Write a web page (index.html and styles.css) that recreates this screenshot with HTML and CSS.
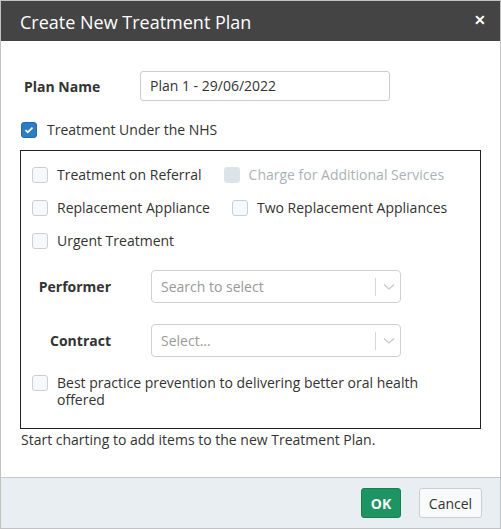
FILE: index.html
```html
<!DOCTYPE html>
<html>
  <head>
    <title>Create New Treatment Plan</title>
    <link rel="stylesheet" href="styles.css">
  </head>
  <body>
    <div class="dialog">
      <div class="dialog-header">
        <h1>Create New Treatment Plan</h1>
        <span class="close">&#x2715;</span>
      </div>
      <div class="dialog-body">
        <div class="plan-row">
          <label class="plan-label">Plan Name</label>
          <div class="text-input">Plan 1 - 29/06/2022</div>
        </div>
        <label class="check nhs">
          <span class="box checked">
            <svg viewBox="0 0 16 16" width="16" height="16"><path d="M4 8.2l2.6 2.5L12 5.4" fill="none" stroke="#fff" stroke-width="2"/></svg>
          </span>
          Treatment Under the NHS
        </label>
        <div class="nhs-panel">
          <div class="check-grid">
            <label class="check"><span class="box"></span>Treatment on Referral</label>
            <label class="check disabled"><span class="box"></span>Charge for Additional Services</label>
            <label class="check"><span class="box"></span>Replacement Appliance</label>
            <label class="check"><span class="box"></span>Two Replacement Appliances</label>
            <label class="check"><span class="box"></span>Urgent Treatment</label>
          </div>
          <div class="field-row">
            <label class="field-label">Performer</label>
            <div class="select">
              <span class="placeholder">Search to select</span>
              <span class="sep"></span>
              <svg class="chevron" viewBox="0 0 12 8" width="12" height="8"><path d="M1 1.5l5 4.5 5-4.5" fill="none" stroke="#c8c8c8" stroke-width="1.3"/></svg>
            </div>
          </div>
          <div class="field-row">
            <label class="field-label">Contract</label>
            <div class="select">
              <span class="placeholder">Select...</span>
              <span class="sep"></span>
              <svg class="chevron" viewBox="0 0 12 8" width="12" height="8"><path d="M1 1.5l5 4.5 5-4.5" fill="none" stroke="#c8c8c8" stroke-width="1.3"/></svg>
            </div>
          </div>
          <label class="check wide"><span class="box"></span>Best practice prevention to delivering better oral health offered</label>
        </div>
        <p class="hint">Start charting to add items to the new Treatment Plan.</p>
      </div>
      <div class="dialog-footer">
        <button class="btn ok">OK</button>
        <button class="btn cancel">Cancel</button>
      </div>
    </div>
  </body>
</html>
```

FILE: styles.css
```css
body {
  margin: 0;
  font-family: "Open Sans", sans-serif;
  color: #333;
  background: #fff;
}

.dialog {
  width: 501px;
  height: 529px;
  box-sizing: border-box;
  border: 1px solid #c2c2c2;
  display: flex;
  flex-direction: column;
}

.dialog-header {
  height: 40px;
  background-color: #444;
  display: flex;
  align-items: center;
  justify-content: space-between;
  padding: 0 14px 0 19px;
}

.dialog-header h1 {
  margin: 0;
  color: #fff;
  font-size: 18px;
  font-weight: normal;
  margin-top: 2px;
}

.close {
  color: #fff;
  font-size: 14px;
  font-weight: bold;
  margin-top: -4px;
}

.dialog-body {
  flex: 1;
  padding: 30px 19px 0;
}

.plan-row {
  display: flex;
  align-items: center;
}

.plan-label {
  width: 116px;
  padding-left: 4px;
  font-size: 14px;
  font-weight: bold;
}

.text-input {
  width: 230px;
  height: 28px;
  border: 1px solid #ccc;
  border-radius: 3px;
  padding: 0 9px;
  line-height: 28px;
  font-size: 14px;
}

.check {
  display: flex;
  align-items: flex-start;
  font-size: 14px;
  line-height: 17px;
}

.box {
  flex: none;
  width: 14px;
  height: 14px;
  border: 1px solid #c9ced3;
  border-radius: 3px;
  background: #f7f8f9;
  margin: 1px 9px 0 0;
  display: flex;
  align-items: center;
  justify-content: center;
}

.box.checked {
  background: #2f7cc0;
  border-color: #1f6aaa;
}

.nhs {
  margin-top: 20px;
  margin-left: 1px;
}

.nhs .box {
  margin-right: 10px;
}

.disabled {
  color: #aab2b8;
}

.disabled .box {
  background: #dde4e8;
  border-color: #dde4e8;
}

.nhs-panel {
  margin-top: 12px;
  height: 279px;
  box-sizing: border-box;
  border: 1px solid #222;
  padding: 15px 11px 0;
}

.check-grid {
  display: flex;
  flex-wrap: wrap;
  column-gap: 22px;
  row-gap: 16px;
}

.field-row {
  display: flex;
  align-items: center;
  margin-top: 21px;
}

.field-label {
  width: 79px;
  text-align: right;
  font-size: 14px;
  font-weight: bold;
  margin-right: 40px;
}

.select {
  width: 239px;
  height: 31px;
  border: 1px solid #d0d0d0;
  border-radius: 4px;
  display: flex;
  align-items: center;
  padding-left: 9px;
}

.placeholder {
  flex: 1;
  color: #999;
  font-size: 14px;
}

.sep {
  width: 1px;
  height: 18px;
  background: #d6d6d6;
}

.chevron {
  margin: 1px 5px 0 7px;
}

.wide {
  margin-top: 17px;
}

.hint {
  margin: 1px 0 0 1px;
  font-size: 14px;
}

.dialog-footer {
  height: 50px;
  border-top: 1px solid #c5cbd0;
  background-color: #e9eef2;
  display: flex;
  align-items: center;
  justify-content: flex-end;
  gap: 18px;
  padding-right: 18px;
}

.btn {
  font-family: "Open Sans", sans-serif;
  font-size: 14px;
  height: 30px;
  border-radius: 3px;
  cursor: pointer;
}

.ok {
  width: 40px;
  background-color: #1d9461;
  border: 1px solid #17804f;
  color: #fff;
  font-weight: bold;
}

.cancel {
  width: 63px;
  background-color: #f9fafb;
  border: 1px solid #c9ced3;
  color: #333;
}
```
